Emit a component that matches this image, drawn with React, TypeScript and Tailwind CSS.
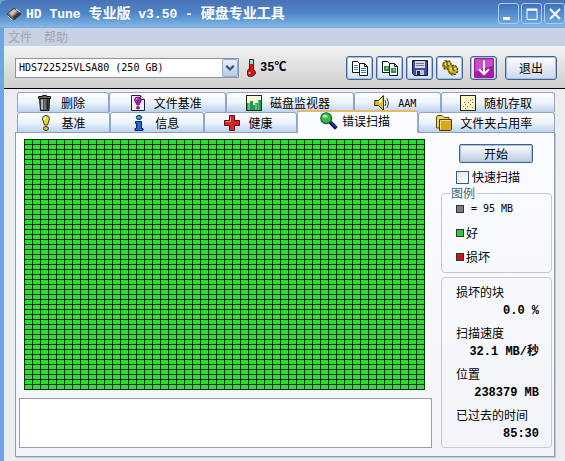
import { useState, type ReactNode } from 'react';

const sans = "font-['DejaVu_Sans_Mono','Noto_Sans_CJK_SC',monospace]";
const cjk = "font-['Noto_Sans_CJK_SC',sans-serif]";

function Svg({ size = 16, children, className = '' }: { size?: number; children: ReactNode; className?: string }) {
  return (
    <svg width={size} height={size} viewBox="0 0 16 16" className={`shrink-0 ${className}`} aria-hidden="true">
      {children}
    </svg>
  );
}

const icons = {
  trash: (
    <>
      <path d="M5.5 1.500v-1h4v1h4v2h-12v-2z" fill="#666" stroke="#111" />
      <path d="M2.500 3.500h10l-.5 12H3.500z" fill="#555" stroke="#111" />
      <path d="M5 4.500v10" stroke="#b5b5b5" strokeWidth="2" />
      <path d="M8 4.500v10" stroke="#888" />
      <path d="M10.500 4.500v10" stroke="#222" strokeWidth="1.500" />
    </>
  ),
  fileBench: (
    <>
      <path d="M1.500.500h9l4 4v11h-13z" fill="#f7e9f7" stroke="#222" />
      <path d="M10.500.500v4h4" fill="#fff" stroke="#222" />
      <path d="M4.500 5q0-3 3.500-3t3.500 3L9 10H7z" fill="#a020a8" stroke="#400848" strokeWidth=".7" />
      <path d="M6 5q0-1.500 1.500-1.500" stroke="#f2b8f2" fill="none" />
      <rect x="6.500" y="11.500" width="3" height="2.500" rx="1" fill="#a020a8" stroke="#400848" strokeWidth=".6" />
    </>
  ),
  monitor: (
    <>
      <rect x=".5" y=".5" width="15" height="15" fill="#fdfde0" stroke="#222" />
      <path d="M1 15V8h3V6h3v4h2V8h3V5h3v10z" fill="#1f9a50" />
      <path d="M2 8h2v7H2zM9 9h2v6H9zM12 6h1v9h-1z" fill="#55c873" />
    </>
  ),
  speaker: (
    <>
      <path d="M.7 5.500h3.800l5-5v15l-5-5H.7z" fill="#d8c02c" stroke="#3b3300" />
      <path d="M5 6l3-3v4L5 8z" fill="#fff9b5" />
      <path d="M11 5q2 3 0 6M13 3q3 5 0 10" fill="none" stroke="#444" />
    </>
  ),
  scatter: (
    <>
      <rect x=".5" y=".5" width="15" height="15" fill="#fdf6c8" stroke="#222" />
      <path d="M3 11h1v1H3zM5 9h1v1H5zM7 11h1v1H7zM8 7h1v1H8zM10 9h1v1h-1zM12 4h1v1h-1zM10 5h1v1h-1zM4 7h1v1H4zM12 7h1v1h-1zM5 13h1v1H5zM12 12h1v1h-1z" fill="#94591d" />
    </>
  ),
  bang: (
    <>
      <path d="M4.500 4q0-3.500 3.500-3.500T11.500 4L9.500 10h-3z" fill="#e5dc35" stroke="#3b3b10" />
      <path d="M6 4.500q0-2 2-2" stroke="#fff" strokeWidth="1.500" fill="none" />
      <ellipse cx="8" cy="13.500" rx="2.500" ry="2" fill="#d2c62a" stroke="#3b3b10" />
    </>
  ),
  info: (
    <>
      <ellipse cx="8" cy="2.500" rx="2.700" ry="2" fill="#37b7e8" stroke="#0b2450" />
      <path d="M4.500 6.500h6v7h1.500v2H4v-2h1.500v-5h-1z" fill="#2567d8" stroke="#0b1e50" />
    </>
  ),
  health: (
    <>
      <path d="M5.500.500h5v5h5v5h-5v5h-5v-5h-5v-5h5z" fill="#d92525" stroke="#551010" />
      <path d="M6.500 1.500v5h-5" stroke="#ff8c75" fill="none" />
    </>
  ),
  scan: (
    <>
      <path d="M9 9l5.500 5.500" stroke="#101850" strokeWidth="3.500" />
      <path d="M9.500 9l4.500 4.500" stroke="#2638b8" strokeWidth="1.200" />
      <circle cx="5.500" cy="5.500" r="4.800" fill="#35b94a" stroke="#175a31" />
      <ellipse cx="4.500" cy="3.800" rx="2.200" ry="1.500" fill="#9bed9d" />
    </>
  ),
  folder: (
    <>
      <path d="M.5 13V2l1-1.500h4.500l2 2h5V13z" fill="#f0d45a" stroke="#5c4510" />
      <path d="M3.500 4.500h12v10l-1 1h-11z" fill="#d5a81e" stroke="#4c3708" />
      <path d="M4.500 14.500v-9h10" stroke="#f6df7b" fill="none" />
    </>
  ),
  copy: (
    <>
      <path d="M.5 1.500h5l2 2v9h-7z" fill="#fff" stroke="#111" />
      <path d="M7.500 3.500h5l3 3v9h-8z" fill="#fff" stroke="#111" />
      <path d="M2 5.500h4M2 7.500h4M2 9.500h4M9 8.500h5M9 10.500h5M9 12.500h5" stroke="#3080c0" />
      <path d="M12.500 3.500v3h3" fill="none" stroke="#111" />
    </>
  ),
  copyImage: (
    <>
      <path d="M.5 1.500h5l2 2v9h-7z" fill="#fff" stroke="#111" />
      <path d="M7.500 3.500h5l3 3v9h-8z" fill="#fff" stroke="#111" />
      <path d="M2 6h5v5H2zM9 8h5v5H9z" fill="#299044" />
      <path d="M4 7h2v2H4zM11 9h2v2h-2z" fill="#78cda0" />
      <path d="M12.500 3.500v3h3" fill="none" stroke="#111" />
    </>
  ),
  save: (
    <>
      <path d="M.5.500h15v15h-13l-2-2z" fill="#454aa8" stroke="#111640" />
      <path d="M3 1h10v7H3z" fill="#d7d9df" />
      <path d="M4 3.500h8M4 5.500h8" stroke="#777d91" />
      <path d="M4 10h8v5H4z" fill="#bfc4d4" />
      <path d="M5 11h3v4H5z" fill="#20264e" />
    </>
  ),
  gears: (
    <>
      <path d="M1 4l2-3 4 0 2 2 0 3 3-1 3 2 1 4-2 3-4 1-3-3-1-3-3 0-2-2z" fill="#c9b929" stroke="#4d4307" strokeWidth="1.300" strokeDasharray="2.500 1" />
      <path d="M2 5l1 2h4M6 10l2 3 4 1" stroke="#80720c" strokeWidth="1.500" fill="none" />
      <path d="M5 1v4l2 1M11 6v4l2 1" stroke="#423a06" fill="none" />
      <path d="M3.500 3v2M7 3v2M9 8v3M13 8v2" stroke="#fff176" />
    </>
  ),
};

type IconName = keyof typeof icons;

function Tab({ icon, label, active = false, onClick }: { icon: IconName; label: string; active?: boolean; onClick: () => void }) {
  return (
    <button
      type="button"
      role="tab"
      aria-selected={active}
      onClick={onClick}
      className={`flex items-center justify-center rounded-t-[3px] border border-b-0 pr-1 text-[12px] leading-4 text-black ${
        active
          ? 'z-10 -mt-[2px] h-[23px] gap-1 border-t-2 border-[#9aaec8] border-t-[#e8b96a] bg-[#fafcff] pb-1'
          : 'h-5 gap-2 border-[#8fa6c4] bg-gradient-to-b from-white via-[#edf4fc] to-[#bcd2ee]'
      }`}
    >
      <Svg size={active ? 18 : 16}>{icons[icon]}</Svg>
      <span className={`whitespace-nowrap pt-[2px] ${label === 'AAM' ? 'text-[10px]' : ''}`}>{label}</span>
    </button>
  );
}

const toolButton =
  'flex h-6 w-[27px] shrink-0 items-center justify-center rounded-[3px] border border-[#3d6499] bg-gradient-to-b from-white to-[#d5e0f1] shadow-[inset_0_0_0_1px_#a9bedb]';
const windowButton =
  'flex size-[21px] items-center justify-center rounded-[3px] border border-[#a9cdf3] bg-gradient-to-b from-[#3f73bd] to-[#6ca6e2]';

const legend = [
  { color: 'bg-[#777d78]', label: '= 95 MB', latin: true },
  { color: 'bg-[#35c53d]', label: '好', latin: false },
  { color: 'bg-[#c81616]', label: '损坏', latin: false },
];

function Stat({ label, value }: { label: string; value: string }) {
  return (
    <div className="h-[41px]">
      <dt className="h-5 text-[12px] leading-5">{label}</dt>
      <dd className="pt-px text-right font-['Liberation_Mono','Noto_Sans_CJK_SC',monospace] text-[12px] leading-4 font-bold whitespace-nowrap">
        {value}
      </dd>
    </div>
  );
}

export default function App() {
  const [tab, setTab] = useState('错误扫描');
  const tabProps = (label: string, icon: IconName) => ({ label, icon, active: tab === label, onClick: () => setTab(label) });

  return (
    <div className={`flex min-h-screen w-full flex-col border-l-4 border-[#6fa6e0] bg-[#ecedf0] text-black ${sans}`}>
      <header className="-ml-1 flex h-7 items-center rounded-tl-[6px] border-b border-[#7fa9e6] bg-gradient-to-b from-[#4a72b6] via-[#4e86c8] to-[#83b8e6] pl-[6px]">
        <Svg>
          <path d="M1 8l7-6 7 6-7 6z" fill="#777" stroke="#444" />
          <path d="M3 7l5-4 3 2-5 5z" fill="#d7b8a8" />
          <path d="M7 11l6-5 2 2-7 6z" fill="#353535" />
          <path d="M2 10l4 4M10 3l4 3" stroke="#ddd" />
        </Svg>
        <h1 className="ml-1 grow text-[14px] leading-5 font-bold whitespace-nowrap text-white">
          <span className="font-['Liberation_Mono',monospace] text-[13px]">HD Tune </span>
          专业版
          <span className="font-['Liberation_Mono',monospace] text-[13px]"> v3.50 - </span>
          硬盘专业工具
        </h1>
        <div className="flex gap-[2px]">
          <button type="button" aria-label="最小化" className={windowButton}>
            <Svg><path d="M2 11h7v3H2z" fill="#fff" /></Svg>
          </button>
          <button type="button" aria-label="最大化" className={windowButton}>
            <Svg><path d="M3 4v9.500h10V4z" fill="none" stroke="#fff" /><path d="M2.500 3.500h11" stroke="#fff" strokeWidth="2" /></Svg>
          </button>
          <button type="button" aria-label="关闭" className={windowButton}>
            <Svg><path d="M3 3l10 10M13 3L3 13" stroke="#fff" strokeWidth="2" /></Svg>
          </button>
        </div>
      </header>

      <nav className={`flex h-[19px] items-center gap-3 border-b border-[#eef2f8] bg-[#c6d1e4] pl-1 text-[12px] leading-4 text-[#a2a5af] ${cjk}`}>
        <button type="button">文件</button>
        <button type="button">帮助</button>
      </nav>

      <div className="flex h-[42px] items-center border-b border-black bg-gradient-to-b from-[#f1f1f1] to-[#cfcfcf] pr-2 pl-[11px]">
        <div className="relative w-[224px]">
          <select
            aria-label="硬盘"
            className="block h-5 w-full appearance-none border border-[#8c96a8] bg-white pl-[3px] text-[10px] leading-4"
          >
            <option>HDS722525VLSA80 (250 GB)</option>
          </select>
          <span className="pointer-events-none absolute top-px right-px flex h-[18px] w-4 items-center justify-center rounded-[2px] border border-[#8fabd6] bg-gradient-to-b from-[#e7f0fc] to-[#b4cbea]">
            <Svg size={12}><path d="M3 5l5 5 5-5" fill="none" stroke="#3b4f6c" strokeWidth="3" /></Svg>
          </span>
        </div>
        <svg width="10" height="18" viewBox="0 0 10 18" className="mr-1 ml-[7px] shrink-0" aria-hidden="true">
          <path d="M3.500.500h4v10q2 1.500 2 3.500t-4 3.500T1.500 14t2-3.500z" fill="#d31717" stroke="#5a1414" />
          <path d="M4 1h3v4H4z" fill="#a7d5de" />
          <path d="M3.500 13v2" stroke="#ffc0b8" strokeWidth="1.500" />
        </svg>
        <span className="grow font-['Liberation_Mono','Noto_Sans_CJK_SC',monospace] text-[12px] font-bold">35℃</span>
        <div className="flex items-center gap-[3px]">
          <button type="button" aria-label="复制文本" className={toolButton}><Svg>{icons.copy}</Svg></button>
          <button type="button" aria-label="复制图像" className={toolButton}><Svg>{icons.copyImage}</Svg></button>
          <button type="button" aria-label="保存" className={toolButton}><Svg>{icons.save}</Svg></button>
          <button type="button" aria-label="选项" className={toolButton}><Svg>{icons.gears}</Svg></button>
        </div>
        <button type="button" aria-label="下载" className={`ml-[7px] ${toolButton}`}>
          <Svg size={20}>
            <rect width="16" height="16" rx="1" fill="#a819ad" />
            <path d="M1 1h14v5L1 11z" fill="#c052c4" />
            <path d="M8 2v11M4 9l4 4 4-4" fill="none" stroke="#fff" strokeWidth="1.600" />
          </Svg>
        </button>
        <button type="button" className={`ml-2 h-6 w-[52px] rounded-[3px] border border-[#3d6499] bg-gradient-to-b from-white to-[#cbd8ec] text-[12px] leading-4 shadow-[inset_0_0_0_1px_#a9bedb] ${cjk}`}>
          退出
        </button>
      </div>

      <main className="flex grow flex-col pt-[3px] pr-[10px] pb-1 pl-[11px]">
        <div role="tablist" className="ml-[2px]">
          <div className="grid grid-cols-[92fr_117fr_127fr_87fr_114fr]">
            <Tab {...tabProps('删除', 'trash')} />
            <Tab {...tabProps('文件基准', 'fileBench')} />
            <Tab {...tabProps('磁盘监视器', 'monitor')} />
            <Tab {...tabProps('AAM', 'speaker')} />
            <Tab {...tabProps('随机存取', 'scatter')} />
          </div>
          <div className="grid h-5 grid-cols-[93fr_94fr_92fr_121fr_137fr]">
            <Tab {...tabProps('基准', 'bang')} />
            <Tab {...tabProps('信息', 'info')} />
            <Tab {...tabProps('健康', 'health')} />
            <Tab {...tabProps('错误扫描', 'scan')} />
            <Tab {...tabProps('文件夹占用率', 'folder')} />
          </div>
        </div>

        <section className="flex grow gap-[9px] border border-[#8c9db8] bg-gradient-to-b from-[#fbfcff] to-[#f2f4f9] pt-[6px] pr-[2px] pb-2 pl-[3px] shadow-[1px_1px_0_#c4cad4]">
          <div className="flex min-w-0 grow flex-col gap-2">
            <svg width="401" height="251" className="ml-[5px] block shrink-0" role="img" aria-label="磁盘块">
              <defs>
                <pattern id="blocks" width="8" height="10" patternUnits="userSpaceOnUse">
                  <rect width="8" height="10" fill="#043006" />
                  <rect x="1" y="1" width="7" height="4" fill="#25e32c" />
                  <rect x="1" y="6" width="7" height="4" fill="#38d840" />
                </pattern>
              </defs>
              <rect width="401" height="251" fill="url(#blocks)" />
            </svg>
            <textarea aria-label="扫描日志" readOnly className="block min-h-[50px] w-full grow resize-none border border-[#9b9da8] bg-white" />
          </div>

          <aside className={`flex w-[111px] shrink-0 flex-col ${cjk}`}>
            <button type="button" className="mt-[5px] ml-[18px] h-[19px] w-[74px] rounded-[2px] border border-[#3d6499] bg-gradient-to-b from-white to-[#b9cae4] text-[12px] leading-4 shadow-[inset_0_0_0_1px_#a9bedb]">
              开始
            </button>
            <label className="mt-[6px] ml-[15px] flex h-4 items-center gap-[3px] text-[12px] leading-4">
              <input type="checkbox" className="size-[13px] appearance-none border border-[#33607f] bg-gradient-to-br from-[#dfe3df] to-white checked:bg-[#35c53d]" />
              快速扫描
            </label>
            <fieldset className="h-[88px] rounded-[4px] border border-[#c5c9d2] pl-[14px]">
              <legend className="-ml-[6px] px-px text-[12px] leading-4 text-[#3d647c]">图例</legend>
              <ul className="-mt-1">
                {legend.map((item) => (
                  <li key={item.label} className="flex h-6 items-center text-[12px] leading-4">
                    <span className={`mr-[2px] size-2 border border-[#333] ${item.color}`} />
                    {item.latin ? <span className={`ml-[5px] text-[10px] ${sans}`}>{item.label}</span> : item.label}
                  </li>
                ))}
              </ul>
            </fieldset>
            <dl className="mt-1 grow rounded-[4px] border border-[#c5c9d2] pt-1 pr-3 pl-[14px]">
              <Stat label="损坏的块" value="0.0 %" />
              <Stat label="扫描速度" value="32.1 MB/秒" />
              <Stat label="位置" value="238379 MB" />
              <Stat label="已过去的时间" value="85:30" />
            </dl>
          </aside>
        </section>
      </main>
    </div>
  );
}
